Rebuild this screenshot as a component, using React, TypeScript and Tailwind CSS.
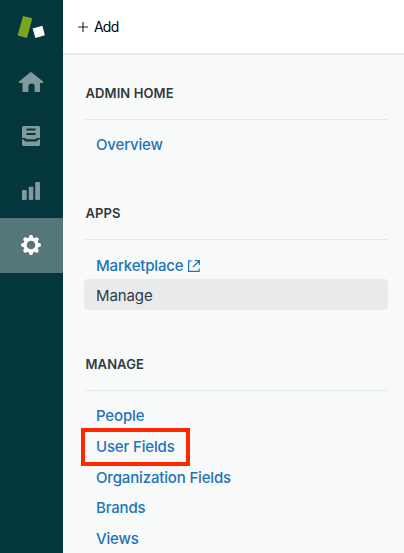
import type { ReactNode } from "react";

function Logo() {
  return (
    <svg width="63" height="55" viewBox="0 0 63 55">
      <path d="M23 16 L32.3 18.2 L27 38 L17.6 35.6 Z" fill="#78a71f" />
      <path d="M32.6 28.6 L42.4 25.8 L44.8 35.2 L35.4 38 Z" fill="#fff" />
    </svg>
  );
}

function HomeIcon() {
  return (
    <svg width="26" height="22" viewBox="0 0 26 22" fill="currentColor">
      <path d="M12.1 1.4a1.4 1.4 0 0 1 1.8 0l10.8 8.8c.9.8.4 1.8-.5 1.8H22v8.2c0 .5-.3.8-.8.8h-4.6v-5.4a3.1 3.1 0 0 0-6.2 0V21H5.3c-.5 0-.8-.3-.8-.8V12H1.8c-.9 0-1.4-1-.5-1.8z" />
    </svg>
  );
}

function ViewsIcon() {
  return (
    <svg width="18" height="20" viewBox="0 0 18 20" fill="currentColor">
      <path
        fillRule="evenodd"
        d="M1.5 0h15A1.5 1.5 0 0 1 18 1.5V12h-3.6v.6c0 .4-.2.6-.6.6H4.2c-.4 0-.6-.2-.6-.6V12H0V1.5A1.5 1.5 0 0 1 1.5 0ZM4.5 2.6v2h9v-2zM4.5 7v2h9v-2z"
      />
      <path d="M0 13.6h2.2v.4c0 .9.6 1.4 1.4 1.4h10.8c.8 0 1.4-.5 1.4-1.4v-.4H18v5c0 .9-.5 1.4-1.4 1.4H1.4C.5 20 0 19.5 0 18.6z" />
    </svg>
  );
}

function ReportsIcon() {
  return (
    <svg width="18" height="18" viewBox="0 0 18 18" fill="currentColor">
      <rect x="0" y="8" width="4.8" height="10" rx="1" />
      <rect x="6.7" y="4.8" width="4.6" height="13.2" rx="1" />
      <rect x="13.2" y="0" width="4.8" height="18" rx="1" />
    </svg>
  );
}

function GearIcon() {
  return (
    <svg width="20" height="20" viewBox="-10 -10 20 20">
      <circle r="5.9" fill="none" stroke="#fff" strokeWidth="3.2" />
      {[0, 45, 90, 135, 180, 225, 270, 315].map((angle) => (
        <path
          key={angle}
          transform={`rotate(${angle})`}
          d="M-2.6 -6.8 L-1.6 -9.2 Q-1.4 -9.9 -.8 -9.9 H.8 Q1.4 -9.9 1.6 -9.2 L2.6 -6.8 Z"
          fill="#fff"
        />
      ))}
    </svg>
  );
}

function ExternalIcon() {
  return (
    <svg className="mt-[3px]" width="12" height="12" viewBox="0 0 12 12" fill="none" stroke="currentColor" strokeWidth="1.2">
      <path d="M3.5.9H.6v10.5h10.5V8.5M7 .6h4.4V5M11.2.8 5 7" />
    </svg>
  );
}

function Section({ title, children }: { title: string; children: ReactNode }) {
  return (
    <section className="mb-[37.875px]">
      <h2 className="h-[30px] pl-[1.5px] text-[13px] leading-[30px] font-semibold tracking-[0.1px] text-[#2f3941]">
        {title}
      </h2>
      <hr className="mt-[11px] mb-[9.375px] ml-px border-[#e6e9ea]" />
      <ul className="flow-root">{children}</ul>
    </section>
  );
}

function Item({ label, active, external }: { label: string; active?: boolean; external?: boolean }) {
  return (
    <li
      className={`flex h-[30.75px] items-center rounded-[4px] pl-3 text-[15px] leading-[31px] ${
        active
          ? "-mt-[0.75px] mb-[0.75px] bg-[#e9eaec] pt-[1.5px] tracking-[-0.1px] text-[#2f3941]"
          : "gap-1 font-medium tracking-[-0.16px] text-[#1f73b7]"
      }`}
    >
      <span className={external ? "pt-px" : ""}>{label}</span>
      {external && <ExternalIcon />}
    </li>
  );
}

export default function App() {
  return (
    <div className="flex h-[553px] w-[404px] overflow-hidden bg-[#f8f9f9] font-['Inter',sans-serif]">
      <nav className="flex w-[63px] shrink-0 flex-col bg-[#03363d] text-[#819a9e]">
        <div className="h-[55px]"><Logo /></div>
        <div className="flex h-[54px] items-center justify-center pr-px"><HomeIcon /></div>
        <div className="flex h-[54px] items-center justify-center pr-px"><ViewsIcon /></div>
        <div className="flex h-[55px] items-center justify-center pr-px"><ReportsIcon /></div>
        <div className="flex h-[55px] items-center justify-center bg-[#567779] pr-px pb-px"><GearIcon /></div>
      </nav>
      <div className="min-w-0 flex-1">
        <header className="flex h-[55px] items-center gap-[6px] border-b-2 border-[#e9ebed] bg-white pl-[15px] text-[14px] tracking-[-0.8px] text-black">
          <svg width="10" height="10" viewBox="0 0 10 10" stroke="#222" strokeWidth="1.1">
            <path d="M5 0v10M0 5h10" />
          </svg>
          <span>Add</span>
        </header>
        <main className="pt-[23px] pr-4 pl-[21px]">
          <Section title="ADMIN HOME">
            <Item label="Overview" />
          </Section>
          <Section title="APPS">
            <Item label="Marketplace" external />
            <Item label="Manage" active />
          </Section>
          <Section title="MANAGE">
            <Item label="People" />
            <div className="relative">
              <Item label="User Fields" />
              <div className="absolute -top-[2.75px] -left-[3px] h-[38px] w-[109px] border-4 border-[#ff2600]" />
            </div>
            <Item label="Organization Fields" />
            <Item label="Brands" />
            <Item label="Views" />
          </Section>
        </main>
      </div>
    </div>
  );
}
